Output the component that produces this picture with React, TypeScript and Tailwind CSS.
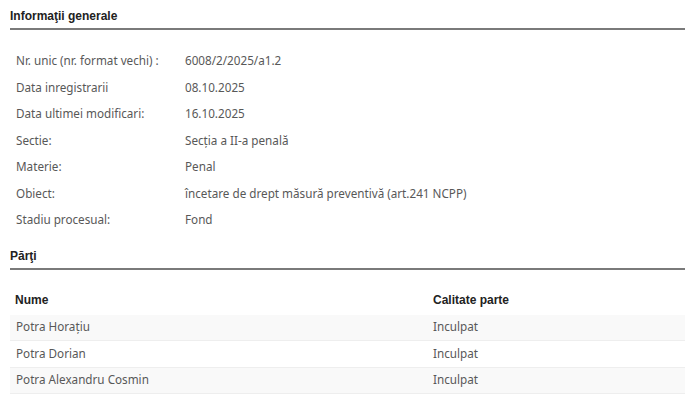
import React from "react";

const info: [string, string][] = [
  ["Nr. unic (nr. format vechi) :", "6008/2/2025/a1.2"],
  ["Data inregistrarii", "08.10.2025"],
  ["Data ultimei modificari:", "16.10.2025"],
  ["Sectie:", "Secția a II-a penală"],
  ["Materie:", "Penal"],
  ["Obiect:", "încetare de drept măsură preventivă (art.241 NCPP)"],
  ["Stadiu procesual:", "Fond"],
];

const parti: [string, string][] = [
  ["Potra Horațiu", "Inculpat"],
  ["Potra Dorian", "Inculpat"],
  ["Potra Alexandru Cosmin", "Inculpat"],
];

export default function App() {
  return (
    <div className="w-[700px] h-[408px] bg-white overflow-hidden pl-[10px] pr-[15px]">
      <div className="pt-[11px]">
        <div className="h-[19px] flex items-end pb-[3px] text-[12px] font-bold text-[#222] [font-family:'Liberation_Sans',Arial,sans-serif] border-b-2 border-[#7a7a7a]">
          Informaţii generale
        </div>
      </div>
      <div className="pt-[18px] pl-[6px] [font-family:'Noto_Sans',Tahoma,sans-serif] text-[11.7px] text-[#585858]">
        {info.map(([k, v]) => (
          <div key={k} className="flex items-center h-[26.5px]">
            <div className="w-[169px] shrink-0">{k}</div>
            <div>{v}</div>
          </div>
        ))}
      </div>
      <div className="pt-[16px]">
        <div className="h-[20px] flex items-end pb-[3px] text-[12px] font-bold text-[#222] [font-family:'Liberation_Sans',Arial,sans-serif] border-b-2 border-[#7a7a7a]">
          Părţi
        </div>
      </div>
      <div className="pt-[16px]">
        <div className="flex items-center h-[29px] text-[12px] font-bold text-[#222] [font-family:'Liberation_Sans',Arial,sans-serif]">
          <div className="w-[423px] pl-[5px]">Nume</div>
          <div>Calitate parte</div>
        </div>
        {parti.map(([n, c], i) => (
          <div
            key={n}
            className={
              "flex items-center h-[26.5px] border-b border-[#eeeeee] text-[11.7px] text-[#585858] [font-family:'Noto_Sans',Tahoma,sans-serif] " +
              (i % 2 === 0 ? "bg-[#f9f9f9]" : "bg-white")
            }
          >
            <div className="w-[423px] pl-[6px]">{n}</div>
            <div>{c}</div>
          </div>
        ))}
      </div>
    </div>
  );
}
